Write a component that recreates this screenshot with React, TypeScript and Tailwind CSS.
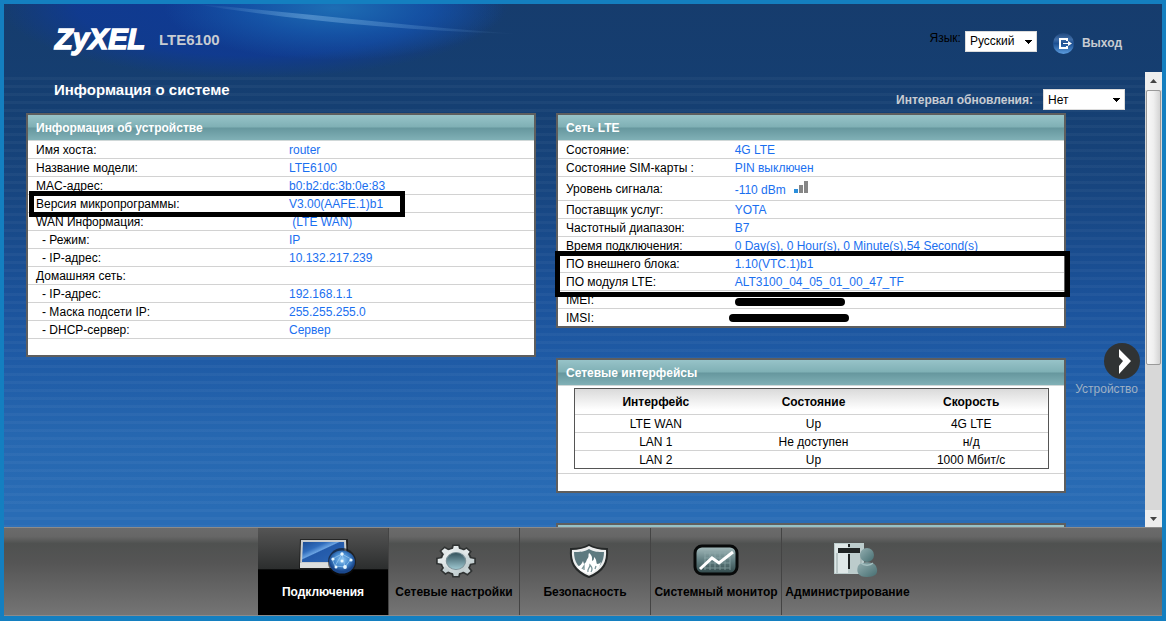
import type { ReactNode } from "react";

type Row = { label: string; value?: ReactNode; sub?: boolean; mark?: "one" | "two"; tall?: boolean };

function Signal() {
  return (
    <svg width="15" height="13" viewBox="0 0 15 13" aria-hidden="true" className="mb-1 shrink-0">
      <rect x="0" y="8" width="4" height="4" fill="#2b8fdc" />
      <rect x="5" y="4" width="4" height="8" fill="#868686" />
      <rect x="10" y="0" width="4" height="12" fill="#868686" />
    </svg>
  );
}

function Scribble({ wide }: { wide?: boolean }) {
  return (
    <span className={wide ? "-ml-1.5 block h-2 w-[120px] rounded-full bg-black" : "mt-1 block h-2 w-[110px] rounded-full bg-black"} />
  );
}

const device: Row[] = [
  { label: "Имя хоста:", value: "router" },
  { label: "Название модели:", value: "LTE6100" },
  { label: "MAC-адрес:", value: "b0:b2:dc:3b:0e:83" },
  { label: "Версия микропрограммы:", value: "V3.00(AAFE.1)b1", mark: "one" },
  { label: "WAN Информация:", value: "\u00a0(LTE WAN)" },
  { label: "- Режим:", value: "IP", sub: true },
  { label: "- IP-адрес:", value: "10.132.217.239", sub: true },
  { label: "Домашняя сеть:" },
  { label: "- IP-адрес:", value: "192.168.1.1", sub: true },
  { label: "- Маска подсети IP:", value: "255.255.255.0", sub: true },
  { label: "- DHCP-сервер:", value: "Сервер", sub: true },
];

const lte: Row[] = [
  { label: "Состояние:", value: "4G LTE" },
  { label: "Состояние SIM-карты :", value: "PIN выключен" },
  { label: "Уровень сигнала:", value: <span className="flex items-center gap-2 pt-0.5">-110 dBm <Signal /></span>, tall: true },
  { label: "Поставщик услуг:", value: "YOTA" },
  { label: "Частотный диапазон:", value: "B7" },
  { label: "Время подключения:", value: "0 Day(s), 0 Hour(s), 0 Minute(s),54 Second(s)" },
  { label: "ПО внешнего блока:", value: "1.10(VTC.1)b1", mark: "two" },
  { label: "ПО модуля LTE:", value: "ALT3100_04_05_01_00_47_TF" },
  { label: "IMEI:", value: <Scribble /> },
  { label: "IMSI:", value: <Scribble wide /> },
];

function Panel({ title, children }: { title?: string; children?: ReactNode }) {
  const bar =
    "h-[26px] border-b border-[#d0d8d8] bg-[linear-gradient(#97c3c8_0%,#7fb0b5_48%,#66979e_52%,#80b0b6_100%)] px-2 text-xs leading-[26px] font-bold text-white";
  return (
    <section className="border-2 border-[#5e5e5e] bg-white">
      {title ? <h2 className={bar}>{title}</h2> : <div className={bar} />}
      {children}
    </section>
  );
}

function Details({ rows, split }: { rows: Row[]; split: string }) {
  return (
    <dl>
      {rows.map((r, i) => (
        <div
          key={i}
          className={`relative grid items-center border-b border-[#d2d2d2] last:border-b-0 ${split} ${r.tall ? "h-6" : "h-[18px] last:h-[17px]"}`}
        >
          <dt className={r.sub ? "pl-3.5" : "pl-2"}>{r.label}</dt>
          <dd className="pl-2 text-[#1a6ff0]">{r.value}</dd>
          {r.mark === "one" && <span className="absolute -top-1 left-px z-10 h-[26px] w-[376px] border-5 border-black" />}
          {r.mark === "two" && <span className="absolute -top-1 -right-[6px] -left-[3px] z-10 h-[46px] border-5 border-black" />}
        </div>
      ))}
    </dl>
  );
}

const ports = [
  ["LTE WAN", "Up", "4G LTE"],
  ["LAN 1", "Не доступен", "н/д"],
  ["LAN 2", "Up", "1000 Мбит/с"],
];

function Picker({ id, value, width }: { id: string; value: string; width: string }) {
  return (
    <span className={`relative flex ${width}`}>
      <select id={id} className="h-[21px] w-full appearance-none border border-[#dcdcdc] bg-white px-1 text-xs text-black">
        <option>{value}</option>
      </select>
      <svg className="pointer-events-none absolute top-[9px] right-[5px]" width="7" height="4" viewBox="0 0 7 4" aria-hidden="true" shapeRendering="crispEdges">
        <path d="M0 0h7v1H0zM1 1h5v1H1zM2 2h3v1H2zM3 3h1v1H3z" fill="#000" />
      </svg>
    </span>
  );
}

function MonitorIcon() {
  return (
    <svg width="60" height="40" viewBox="0 0 60 40" aria-hidden="true" className="ml-2">
      <defs>
        <linearGradient id="scr" x1="0" y1="0" x2="1" y2="1">
          <stop offset="0" stopColor="#1c4c94" /><stop offset=".28" stopColor="#2f6bbb" /><stop offset=".42" stopColor="#6aa3e2" /><stop offset=".45" stopColor="#235aaa" /><stop offset="1" stopColor="#2d66b4" />
        </linearGradient>
        <radialGradient id="globe" cx=".5" cy=".4"><stop offset="0" stopColor="#8bc5f2" /><stop offset=".6" stopColor="#4286cc" /><stop offset="1" stopColor="#1a478c" /></radialGradient>
      </defs>
      <path d="M3 0h48v31H2z" fill="#151515" opacity=".7" />
      <path d="M4 1h45l1 27H3z" fill="#c9cccd" />
      <path d="M6 3h41l1 20H5z" fill="url(#scr)" />
      <path d="M3 24h45v5H3z" fill="#dcdede" />
      <circle cx="45" cy="23" r="14" fill="#101010" opacity=".6" />
      <ellipse cx="45" cy="23" rx="13" ry="11.5" fill="url(#globe)" />
      <path d="M35 20l10-5 9 5-6 8-10-1zM38 27l7-12 3 13" fill="none" stroke="#9fcdf2" strokeWidth=".7" />
      <g fill="#e8f8ff"><circle cx="45" cy="15" r="1.7" /><circle cx="36" cy="20" r="1.6" /><circle cx="48" cy="28" r="1.9" /><circle cx="39" cy="28" r="1.5" /><circle cx="54" cy="21" r="1.6" /><circle cx="45" cy="22" r="1.5" /></g>
    </svg>
  );
}

function GearIcon() {
  return (
    <svg width="44" height="40" viewBox="0 0 44 40" aria-hidden="true" className="ml-1">
      <defs>
        <linearGradient id="gear" x1="0" y1="0" x2="1" y2="1"><stop offset="0" stopColor="#f6f8f8" /><stop offset="1" stopColor="#b4c3c6" /></linearGradient>
        <linearGradient id="hub" x1="0" y1="0" x2="0" y2="1"><stop offset="0" stopColor="#33515b" /><stop offset="1" stopColor="#9fc9d2" /></linearGradient>
      </defs>
      <g transform="translate(22 22) scale(1.14 1)">
        <g stroke="#303333" strokeWidth="3" fill="url(#gear)">
          <circle r="12.5" />
          <path d="M-2-15h4l1 5h-6zM-2 15h4l1-5h-6zM-16-2v4l5 1v-6zM16-2v4l-5 1v-6z" />
          <path d="M-2-15h4l1 5h-6zM-2 15h4l1-5h-6zM-16-2v4l5 1v-6zM16-2v4l-5 1v-6z" transform="rotate(45)" />
        </g>
        <g fill="url(#gear)">
          <circle r="12.5" />
          <path d="M-2-15h4l1 5h-6zM-2 15h4l1-5h-6zM-16-2v4l5 1v-6zM16-2v4l-5 1v-6z" />
          <path d="M-2-15h4l1 5h-6zM-2 15h4l1-5h-6zM-16-2v4l5 1v-6zM16-2v4l-5 1v-6z" transform="rotate(45)" />
        </g>
        <circle r="8.5" fill="url(#hub)" stroke="#7c9299" />
      </g>
    </svg>
  );
}

function ShieldIcon() {
  return (
    <svg width="44" height="40" viewBox="0 0 44 40" aria-hidden="true" className="ml-2">
      <path d="M22 6c5 3 11 4 18 4 1 13-3 22-18 28C7 32 3 23 4 10c7 0 13-1 18-4z" fill="#eceeee" stroke="#252828" strokeWidth="2" />
      <path d="M22 10c5 3 9 3 15 3 0 10-4 16-15 21C11 29 7 23 7 13c6 0 10 0 15-3z" fill="#5d7a80" />
      <path d="M10 28c3-1 5-3 6-6l1 3c3-2 2-4 4-6 1-2 0-3 1-5 4 3 3 6 3 8 2-1 2-2 2-4 3 3 2 5 3 7 2 0 3-1 4-2-1 4-3 7-5 8-3 3-5 3-7 4-5-2-9-3-12-7z" fill="#fff" />
      <path d="M21 33c-1-3 2-4 2-7 2 2 3 4 1 7M15 30l2-3v4M28 30l1-3" fill="none" stroke="#7c979b" strokeWidth="1.3" />
    </svg>
  );
}

function ChartIcon() {
  return (
    <svg width="48" height="40" viewBox="0 0 48 40" aria-hidden="true">
      <defs><linearGradient id="glass" x1="0" y1="0" x2="0" y2="1"><stop offset="0" stopColor="#a9bfc0" /><stop offset=".5" stopColor="#627f82" /><stop offset="1" stopColor="#2f4648" /></linearGradient></defs>
      <rect x="3" y="7" width="42" height="28" rx="7" fill="url(#glass)" stroke="#080a0a" strokeWidth="3" />
      <path d="M12 14h26M12 19h26M12 24h26M12 29h26M13 13v18M18 13v18M23 13v18M28 13v18M33 13v18M38 13v18" stroke="#90abac" strokeWidth="1" opacity=".7" />
      <path d="M8 30l12-11 7 5 14-11" fill="none" stroke="#fff" strokeWidth="3" />
    </svg>
  );
}

function AdminIcon() {
  return (
    <svg width="46" height="40" viewBox="0 0 46 40" aria-hidden="true" className="ml-4">
      <defs><linearGradient id="bust" x1="0" y1="0" x2="1" y2="1"><stop offset="0" stopColor="#93aeb0" /><stop offset="1" stopColor="#466e71" /></linearGradient></defs>
      <path d="M1 4h30v31H1z" fill="#bccccc" />
      <path d="M2 5h13v29H2z" fill="#dfe8e8" />
      <path d="M5 9h22v5H5z" fill="#202525" />
      <path d="M16 5v3M16 15v15" stroke="#1f2424" strokeWidth="2" />
      <path d="M4 14v20M28 14v12" stroke="#92a4a4" />
      <path d="M25 27c3-5 15-5 18 0 3 7 0 11-9 11s-11-5-9-11z" fill="url(#bust)" />
      <circle cx="34" cy="16" r="7" fill="url(#bust)" />
      <path d="M28 24c3 3 9 3 12 0" fill="none" stroke="#a5bfc0" strokeWidth="1.5" />
    </svg>
  );
}

const tabs = [
  { label: "Подключения", icon: <MonitorIcon />, active: true },
  { label: "Сетевые настройки", icon: <GearIcon /> },
  { label: "Безопасность", icon: <ShieldIcon /> },
  { label: "Системный монитор", icon: <ChartIcon /> },
  { label: "Администрирование", icon: <AdminIcon /> },
];

export default function App() {
  return (
    <div className="flex h-screen min-w-[960px] flex-col overflow-hidden border-4 border-b-5 border-[#147fc0] bg-[linear-gradient(#163c6d_0%,#153f72_17%,#17457f_30%,#1b529a_48%,#1f5ba6_58%,#2667b0_70%,#296cb5_82%)] bg-origin-border font-['Liberation_Sans',Arial,sans-serif] text-xs text-black">
      <div className="relative flex min-h-0 flex-1 flex-col">
        <div
          aria-hidden="true"
          className="pointer-events-none absolute top-0 left-0 h-[80px] w-[540px] bg-[radial-gradient(ellipse_170px_52px_at_330px_4px,rgba(32,118,186,0.85),rgba(24,98,178,0.6)_50%,transparent_100%),radial-gradient(ellipse_255px_74px_at_250px_0px,rgba(15,58,150,0.95)_0%,rgba(15,58,150,0.8)_70%,transparent_100%)]"
        >
          <svg width="540" height="60" viewBox="0 0 540 60">
            <defs>
              <linearGradient id="streak"><stop offset="0" stopColor="#7bb1e2" stopOpacity="0" /><stop offset=".35" stopColor="#7bb1e2" /><stop offset="1" stopColor="#7bb1e2" stopOpacity="0" /></linearGradient>
            </defs>
            <path d="M190 0C290 8 400 22 515 30C400 27 290 16 190 0z" fill="url(#streak)" opacity=".5" />
          </svg>
        </div>
        <header className="relative flex h-[68px] shrink-0 items-center justify-between pt-1 pr-10 pl-[50px]">
          <div className="flex items-center gap-3">
            <svg width="93" height="32" viewBox="0 0 93 32" role="img" aria-label="ZyXEL" className="overflow-visible">
              <text x="1" y="25" fontFamily="Liberation Sans, Arial, sans-serif" fontSize="29" fontWeight="700" fontStyle="italic" fill="#fff" stroke="#fff" strokeWidth="1.500">ZyXEL</text>
            </svg>
            <h1 className="text-[15px] font-bold text-[#c8ccd2]">LTE6100</h1>
          </div>
          <div className="flex items-center gap-4 pt-1.5">
            <div className="flex items-center gap-1 pb-1">
              <label htmlFor="lang" className="-mt-1.5">Язык:</label>
              <Picker id="lang" value="Русский" width="w-[72px]" />
            </div>
            <a href="#logout" className="flex items-center gap-2 font-bold text-[#c8ccd2]">
              <svg width="21" height="21" viewBox="0 0 21 21" aria-hidden="true">
                <defs><linearGradient id="exit" x1="0" y1="0" x2="0" y2="1"><stop offset="0" stopColor="#1f477c" /><stop offset=".3" stopColor="#3f6da8" /><stop offset=".5" stopColor="#1c4f91" /><stop offset="1" stopColor="#5c9de0" /></linearGradient></defs>
                <circle cx="10.500" cy="10.500" r="10.500" fill="url(#exit)" />
                <path d="M14 8V6H7v9h7v-2" fill="none" stroke="#fff" strokeWidth="2" />
                <path d="M10 10h5V8l4 2.500-4 2.500v-2h-5z" fill="#fff" />
              </svg>
              Выход
            </a>
          </div>
        </header>

        <div className="relative flex min-h-0 flex-1 bg-[repeating-linear-gradient(transparent_0_5px,rgba(255,255,255,0.035)_5px_8px)]">
          <main className="min-w-0 flex-1 overflow-hidden pl-[22px]">
            <div className="flex h-[41px] items-start justify-between pr-5 pl-7">
              <h2 className="pt-2 text-[15px] leading-5 font-bold text-white">Информация о системе</h2>
              <div className="flex items-center gap-2.5 pt-[17px]">
                <label htmlFor="interval" className="font-bold text-[#c8ccd2]">Интервал обновления:</label>
                <Picker id="interval" value="Нет" width="w-[82px]" />
              </div>
            </div>
            <div className="flex">
              <div className="grid min-w-0 flex-1 grid-cols-2 items-start gap-5">
                <Panel title="Информация об устройстве">
                  <Details rows={device} split="grid-cols-2" />
                  <div className="h-[17px] border-t border-[#d2d2d2]" />
                </Panel>
                <div className="flex flex-col gap-[30px]">
                  <Panel title="Сеть LTE">
                    <Details rows={lte} split="grid-cols-[1fr_2fr]" />
                  </Panel>
                  <Panel title="Сетевые интерфейсы">
                    <div className="border-b border-[#d2d2d2] pt-0.5 pr-[15px] pb-1 pl-4">
                      <table className="w-full table-fixed border-separate border-spacing-0 border border-[#555] text-center">
                        <thead>
                          <tr className="bg-[linear-gradient(#dadada,#ffffff_80%)]">
                            {["Интерфейс", "Состояние", "Скорость"].map((h) => (
                              <th key={h} scope="col" className="h-[26px] border-b border-[#d2d2d2] p-0 pl-1">{h}</th>
                            ))}
                          </tr>
                        </thead>
                        <tbody>
                          {ports.map((p) => (
                            <tr key={p[0]} className="group">
                              {p.map((c) => (
                                <td key={c} className="h-[18px] border-b border-[#d2d2d2] p-0 pl-1 group-last:h-[17px] group-last:border-b-0">{c}</td>
                              ))}
                            </tr>
                          ))}
                        </tbody>
                      </table>
                    </div>
                    <div className="h-[17px]" />
                  </Panel>
                  <Panel />
                </div>
              </div>
              <aside className="flex w-[79px] shrink-0 justify-end pt-[230px] pr-[5px]">
                <button type="button" className="flex flex-col items-end gap-0.5 self-start text-[#9fb0c4]">
                  <svg width="36" height="36" viewBox="0 0 36 36" aria-hidden="true">
                    <circle cx="18" cy="18" r="18" fill="#303334" />
                    <path d="M15 6l12 12-12 13v-8l4-5-4-4z" fill="#fff" />
                  </svg>
                  <span className="pr-0.5">Устройство</span>
                </button>
              </aside>
            </div>
          </main>
          <div aria-hidden="true" className="flex w-[17px] shrink-0 flex-col bg-[#d8d8d8]">
            <span className="flex h-[18px] shrink-0 items-center justify-center bg-[#eee]">
              <svg width="7" height="4" viewBox="0 0 7 4"><path d="M0 4h7L3.500 0z" fill="#444" /></svg>
            </span>
            <span className="mx-px h-[275px] shrink rounded-xs border border-[#999] bg-[linear-gradient(90deg,#f8f8f8,#efefef_50%,#d4d4d4)]" />
            <span className="mt-auto flex h-[17px] shrink-0 items-center justify-center bg-[#eee]">
              <svg width="7" height="4" viewBox="0 0 7 4"><path d="M0 0h7L3.500 4z" fill="#444" /></svg>
            </span>
          </div>
        </div>
      </div>

      <nav className="flex h-[89px] shrink-0 justify-center border-y border-[#8b8b8b] bg-[linear-gradient(#6b6b6b_0%,#666_10%,#4f5150_18%,#555_40%,#757575_100%)] pl-[5px]">
        {tabs.map((t) => (
          <a
            key={t.label}
            href="#section"
            aria-current={t.active ? "page" : undefined}
            className={`flex w-[131px] shrink-0 flex-col items-center border-r border-[#444] pt-[11px] font-bold whitespace-nowrap last:border-r-0 ${
              t.active ? "bg-[linear-gradient(#555_0%,#2c2e2e_47%,#000_48%)] text-white" : "text-black"
            }`}
          >
            {t.icon}
            <span className="pt-[5px] leading-4">{t.label}</span>
          </a>
        ))}
      </nav>
    </div>
  );
}
